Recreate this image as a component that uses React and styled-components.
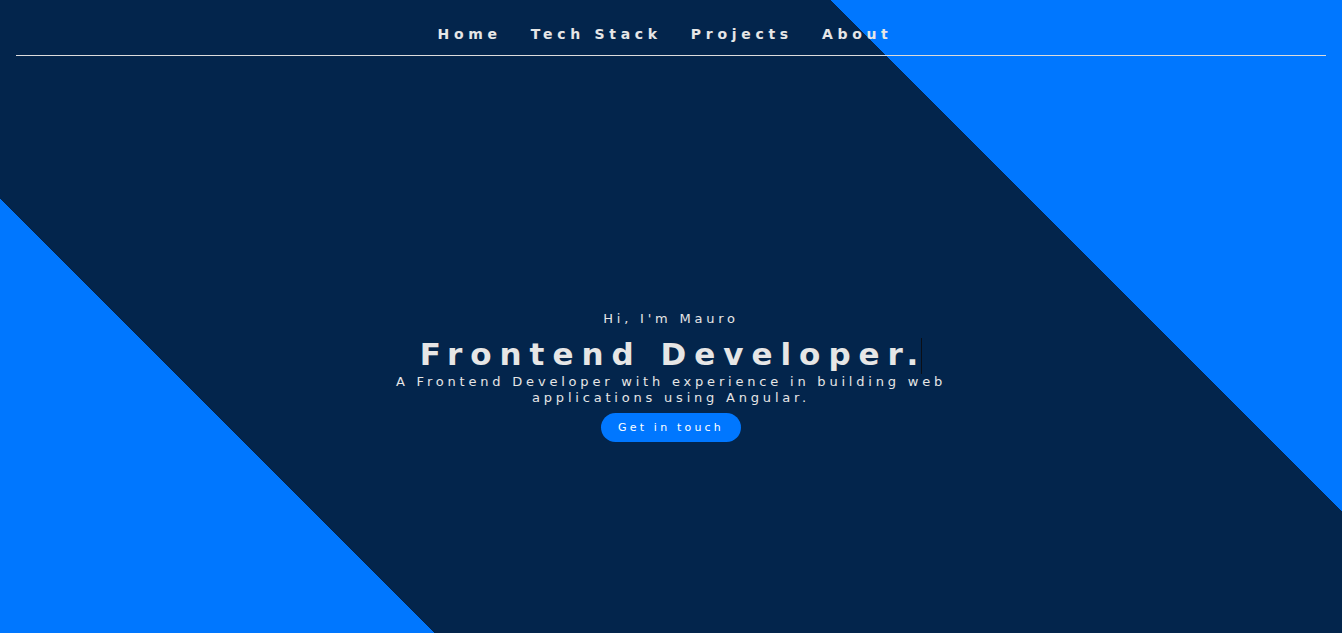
import React from "react";
import styled, { createGlobalStyle } from "styled-components";

const Global = createGlobalStyle`
  html, body { margin: 0; padding: 0; }
  body {
    font-family: "DejaVu Sans", "Open Sans", sans-serif;
    background: #03254c;
  }
  * { box-sizing: border-box; }
`;

const Page = styled.div`
  min-height: 100vh;
  height: 633px;
  display: flex;
  flex-direction: column;
  background: linear-gradient(
    45deg,
    #0077ff 0,
    #0077ff 307px,
    #03254c 307px,
    #03254c 1035px,
    #0077ff 1035px,
    #0077ff 100%
  );
  color: #e6e6e6;
  overflow: hidden;
`;

const Nav = styled.nav`
  margin: 0 16px;
  height: 56px;
  border-bottom: 1px solid #dcdcdc;
  display: flex;
  justify-content: center;
  align-items: center;
  padding-top: 12px;
  padding-right: 12px;
  gap: 29px;
`;

const NavLink = styled.a`
  font-size: 14px;
  font-weight: 700;
  letter-spacing: 4.7px;
  color: #e6e6e6;
  text-decoration: none;
  cursor: pointer;
  white-space: nowrap;
`;

const Hero = styled.section`
  flex: 1;
  display: flex;
  flex-direction: column;
  align-items: center;
  padding-top: 254px;
  text-align: center;
`;

const Greeting = styled.p`
  margin: 0;
  font-size: 13px;
  letter-spacing: 3.8px;
  line-height: 18px;
  white-space: nowrap;
`;

const Title = styled.h1`
  margin: 8px 0 0;
  font-size: 31px;
  font-weight: 700;
  letter-spacing: 8px;
  line-height: 36px;
  white-space: nowrap;
  &::after {
    content: "";
    display: inline-block;
    width: 1px;
    height: 36px;
    background: #0b0f17;
    vertical-align: -9px;
    margin-left: -5px;
  }
`;

const Lead = styled.p`
  margin: 0;
  max-width: 580px;
  font-size: 13px;
  letter-spacing: 3.8px;
  line-height: 16px;
`;

const Button = styled.button`
  margin-top: 7px;
  height: 29px;
  padding: 0 17px;
  border: none;
  border-radius: 15px;
  background: #0077ff;
  color: #ffffff;
  font-family: inherit;
  font-size: 11px;
  letter-spacing: 3.2px;
  cursor: pointer;
  white-space: nowrap;
`;

export default function App() {
  return (
    <>
      <Global />
      <Page>
        <Nav>
          <NavLink>Home</NavLink>
          <NavLink>Tech Stack</NavLink>
          <NavLink>Projects</NavLink>
          <NavLink>About</NavLink>
        </Nav>
        <Hero>
          <Greeting>Hi, I'm Mauro</Greeting>
          <Title>Frontend Developer.</Title>
          <Lead>
            A Frontend Developer with experience in building web applications
            using Angular.
          </Lead>
          <Button>Get in touch</Button>
        </Hero>
      </Page>
    </>
  );
}
